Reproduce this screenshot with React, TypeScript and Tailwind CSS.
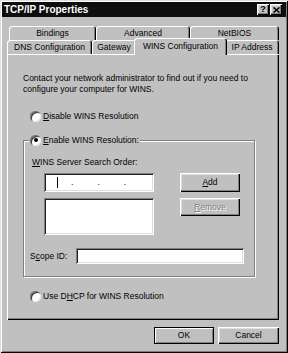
import React from 'react';

const raised =
  'shadow-[inset_1px_1px_0_#fff,inset_-1px_-1px_0_#000,inset_-2px_-2px_0_#808080,inset_2px_2px_0_#dfdfdf]';
const sunken =
  'shadow-[inset_1px_1px_0_#808080,inset_-1px_-1px_0_#fff,inset_2px_2px_0_#202020,inset_-2px_-2px_0_#dfdfdf]';
const tabBevel =
  'rounded-t-[3px] shadow-[inset_1px_1px_0_#fff,inset_-1px_0_0_#000,inset_-2px_0_0_#808080]';

const Radio: React.FC<{ checked?: boolean }> = ({ checked }) => (
  <span className="flex h-[11px] w-[11px] shrink-0 items-center justify-center rounded-full bg-white shadow-[inset_1px_1px_0_#808080,inset_2px_2px_0_#404040,inset_-1px_-1px_0_#e8e8e8]">
    {checked && <span className="h-[4px] w-[4px] rounded-full bg-black" />}
  </span>
);

const Tab: React.FC<{ w: string; children: React.ReactNode }> = ({ w, children }) => (
  <div className={`flex h-[14px] shrink-0 items-center justify-center bg-[#c0c0c0] ${w} ${tabBevel}`}>
    {children}
  </div>
);

export default function App() {
  return (
    <div className="h-[353px] w-[288px] bg-[#c0c0c0] p-[2px] font-['Liberation_Sans',Arial,sans-serif] text-[8.5px] leading-[11px] text-black shadow-[inset_1px_1px_0_#dfdfdf,inset_-1px_-1px_0_#000,inset_2px_2px_0_#fff,inset_-2px_-2px_0_#808080]">
      {/* title bar */}
      <div className="flex h-[15px] items-center justify-between bg-[#0e0e0e] pl-[2px] pr-[4px]">
        <span className="text-[10px] font-bold leading-[15px] text-white">TCP/IP Properties</span>
        <div className="flex gap-[1px]">
          <div className={`flex h-[11px] w-[12px] items-center justify-center bg-[#c0c0c0] text-[9px] font-bold leading-[11px] ${raised}`}>?</div>
          <div className={`flex h-[11px] w-[12px] items-center justify-center bg-[#c0c0c0] ${raised}`}>
            <svg width="7" height="6" viewBox="0 0 7 6">
              <path d="M0.5 0.5 L6.5 5.5 M6.5 0.5 L0.5 5.5" stroke="#000" strokeWidth="1.6" />
            </svg>
          </div>
        </div>
      </div>

      {/* tabs */}
      <div className="ml-[7px] mt-[9px] flex">
        <Tab w="w-[87px]">Bindings</Tab>
        <Tab w="w-[94px]">Advanced</Tab>
        <Tab w="w-[89px]">NetBIOS</Tab>
      </div>
      <div className="ml-[5px] flex h-[14px] w-[272px] items-end">
        <Tab w="w-[85px]">DNS Configuration</Tab>
        <Tab w="w-[44px]">Gateway</Tab>
        <div className={`relative z-10 -mx-[2px] -mb-[1px] flex h-[17px] w-[93px] shrink-0 items-center justify-center bg-[#c0c0c0] pb-[1px] ${tabBevel}`}>
          WINS Configuration
        </div>
        <Tab w="w-[54px]">IP Address</Tab>
      </div>

      {/* panel */}
      <div className="ml-[5px] h-[266px] w-[272px] pt-[19px] shadow-[inset_1px_1px_0_#fff,inset_-1px_-1px_0_#000,inset_-2px_-2px_0_#808080]">
        <p className="pl-[16px]">
          Contact your network administrator to find out if you need to
          <br />
          configure your computer for WINS.
        </p>

        <div className="ml-[23px] mt-[16px] flex h-[11px] items-center gap-[2px]">
          <Radio />
          <span>
            <u>D</u>isable WINS Resolution
          </span>
        </div>

        {/* group box */}
        <div className="ml-[16px] mt-[18px] w-[232px] border border-[#808080] pb-[12px] shadow-[inset_1px_1px_0_#fff,1px_1px_0_#fff]">
          <div className="relative -mt-[7px] ml-[5px] flex h-[12px] w-fit items-center gap-[2px] bg-[#c0c0c0] px-[1px]">
            <Radio checked />
            <span>
              <u>E</u>nable WINS Resolution:
            </span>
          </div>

          <div className="ml-[8px] mt-[11px]">
            <u>W</u>INS Server Search Order:
          </div>

          <div className="ml-[20px] mt-[5px] flex">
            <div className={`flex h-[19px] w-[110px] items-center bg-white ${sunken}`}>
              <span className="ml-[13px] h-[11px] w-[1px] bg-black" />
              <span className="ml-[13px]">.</span>
              <span className="ml-[24px]">.</span>
              <span className="ml-[24px]">.</span>
            </div>
            <button className={`ml-[26px] flex h-[19px] w-[60px] items-center justify-center bg-[#c0c0c0] ${raised}`}>
              <span>
                <u>A</u>dd
              </span>
            </button>
          </div>

          <div className="ml-[20px] mt-[6px] flex items-start">
            <div className={`h-[37px] w-[110px] bg-white ${sunken}`} />
            <button className={`ml-[26px] flex h-[18px] w-[60px] items-center justify-center bg-[#c0c0c0] text-[#808080] [text-shadow:1px_1px_0_#fff] ${raised}`}>
              <span>
                <u>R</u>emove
              </span>
            </button>
          </div>

          <div className="ml-[6px] mt-[13px] flex items-center">
            <span className="w-[46px]">
              S<u>c</u>ope ID:
            </span>
            <div className={`h-[16px] w-[168px] bg-white ${sunken}`} />
          </div>
        </div>

        <div className="ml-[23px] mt-[14px] flex h-[11px] items-center gap-[2px]">
          <Radio />
          <span>
            Use D<u>H</u>CP for WINS Resolution
          </span>
        </div>
      </div>

      {/* dialog buttons */}
      <div className="ml-[152px] mt-[7px] flex gap-[4px]">
        <button className="h-[17px] w-[60px] border border-black bg-[#c0c0c0] shadow-[inset_1px_1px_0_#fff,inset_-1px_-1px_0_#808080]">
          OK
        </button>
        <button className={`h-[17px] w-[61px] bg-[#c0c0c0] ${raised}`}>Cancel</button>
      </div>
    </div>
  );
}
